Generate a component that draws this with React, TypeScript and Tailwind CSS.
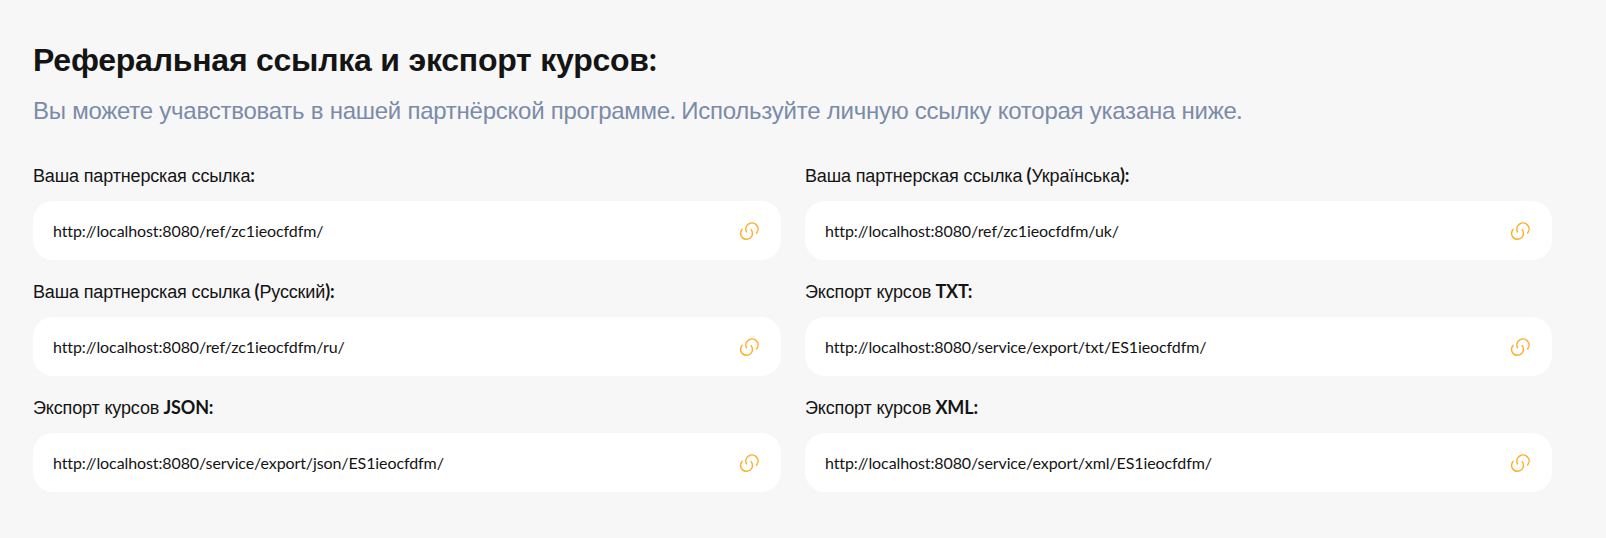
const LINKS = [
  { before: "Ваша партнерская ссылка", bold: "", url: "http://localhost:8080/ref/zc1ieocfdfm/" },
  { before: "Ваша партнерская ссылка (Українська)", bold: "", url: "http://localhost:8080/ref/zc1ieocfdfm/uk/" },
  { before: "Ваша партнерская ссылка (Русский)", bold: "", url: "http://localhost:8080/ref/zc1ieocfdfm/ru/" },
  { before: "Экспорт курсов ", bold: "TXT", url: "http://localhost:8080/service/export/txt/ES1ieocfdfm/" },
  { before: "Экспорт курсов ", bold: "JSON", url: "http://localhost:8080/service/export/json/ES1ieocfdfm/" },
  { before: "Экспорт курсов ", bold: "XML", url: "http://localhost:8080/service/export/xml/ES1ieocfdfm/" },
];

// кириллица идёт фоллбеком на Liberation Sans, латиница и знаки — Lato
function Cy({ text, regular }: { text: string; regular?: boolean }) {
  const parts = text.split(/([\u0400-\u04FF]+(?:\s+[\u0400-\u04FF]+)*)/);
  return (
    <>
      {parts.map((p, i) =>
        i % 2 === 1 ? (
          <span key={i} className={regular ? "font-['Liberation_Sans',sans-serif] font-normal" : "font-['Liberation_Sans',sans-serif]"}>
            {p}
          </span>
        ) : (
          p
        ),
      )}
    </>
  );
}

function LinkIcon() {
  return (
    <svg width="20" height="20" viewBox="0 0 20 20" fill="none" stroke="#fdb02c" strokeWidth="1.5" strokeLinecap="round">
      <path d="M7.5 10.8A6.1 6.1 0 1 1 17.6 12" />
      <path d="M3 8.4A6 6 0 1 0 12.2 8.6" />
    </svg>
  );
}

export default function App() {
  return (
    <div className="min-h-[538px] bg-[#f7f7f7] px-[33px] pt-[37px] font-['Lato',sans-serif] text-[#141414]">
      <h2 className="text-[32px] leading-[44px] font-bold tracking-[-0.23px]">
        <Cy text="Реферальная ссылка и экспорт курсов:" />
      </h2>
      <p className="mt-[10px] text-[24px] leading-[36px] tracking-[-0.25px] text-[#7b8ba8]">
        <Cy text="Вы можете учавствовать в нашей партнёрской программе. Используйте личную ссылку которая указана ниже." />
      </p>
      <div className="mt-[33px] grid w-[1519px] grid-cols-[748px_747px] gap-x-[24px] gap-y-[18px]">
        {LINKS.map((l) => (
          <div key={l.url}>
            <div className="text-[18px] leading-[27px] font-bold tracking-[-0.15px]">
              <Cy text={l.before} regular />
              {l.bold}:
            </div>
            <div className="mt-[11px] flex h-[59px] items-center justify-between rounded-[20px] bg-white pl-[20px] pr-[22px]">
              <span className="text-[16px] tracking-[-0.1px]">{l.url}</span>
              <LinkIcon />
            </div>
          </div>
        ))}
      </div>
    </div>
  );
}
